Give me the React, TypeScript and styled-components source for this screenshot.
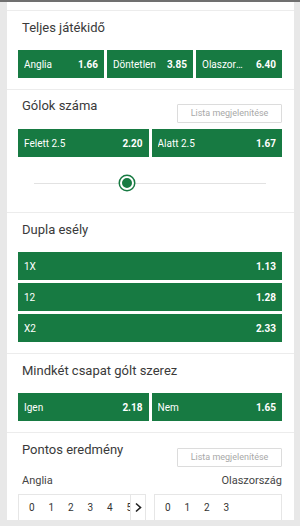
import React from "react";
import styled, { createGlobalStyle } from "styled-components";

const GREEN = "#177a42";

const GlobalStyle = createGlobalStyle`
  html, body {
    margin: 0;
    padding: 0;
    background: #e8e8e8;
    font-family: Roboto, "Liberation Sans", Arial, sans-serif;
  }
`;

interface Odd {
  label: string;
  value: string;
}

const fullTime: Odd[] = [
  { label: "Anglia", value: "1.66" },
  { label: "Döntetlen", value: "3.85" },
  { label: "Olaszország", value: "6.40" },
];
const goals: Odd[] = [
  { label: "Felett 2.5", value: "2.20" },
  { label: "Alatt 2.5", value: "1.67" },
];
const doubleChance: Odd[] = [
  { label: "1X", value: "1.13" },
  { label: "12", value: "1.28" },
  { label: "X2", value: "2.33" },
];
const bothScore: Odd[] = [
  { label: "Igen", value: "2.18" },
  { label: "Nem", value: "1.65" },
];

function OddButton({ odd }: { odd: Odd }) {
  return (
    <OddBox>
      <OddLabel>{odd.label}</OddLabel>
      <OddValue>{odd.value}</OddValue>
    </OddBox>
  );
}

function App() {
  return (
    <Page>
      <GlobalStyle />
      <TopLine />
      <Column>
        <Spacer />
        <Section>
          <Title>Teljes játékidő</Title>
          <OddRow $cols={3}>
            {fullTime.map((o) => (
              <OddButton key={o.label} odd={o} />
            ))}
          </OddRow>
        </Section>

        <Section $top={6} $bottom={0}>
          <Header>
            <Title>Gólok száma</Title>
            <ListButton>Lista megjelenítése</ListButton>
          </Header>
          <OddRow $cols={2} $mt={6}>
            {goals.map((o) => (
              <OddButton key={o.label} odd={o} />
            ))}
          </OddRow>
          <Slider>
            <Track>
              <Thumb $pos={40} />
            </Track>
          </Slider>
        </Section>

        <Section>
          <Title>Dupla esély</Title>
          <OddList>
            {doubleChance.map((o) => (
              <OddButton key={o.label} odd={o} />
            ))}
          </OddList>
        </Section>

        <Section>
          <Title>Mindkét csapat gólt szerez</Title>
          <OddRow $cols={2}>
            {bothScore.map((o) => (
              <OddButton key={o.label} odd={o} />
            ))}
          </OddRow>
        </Section>

        <Section $bottom={0}>
          <Header>
            <Title>Pontos eredmény</Title>
            <ListButton>Lista megjelenítése</ListButton>
          </Header>
          <TeamRow>
            <span>Anglia</span>
            <span>Olaszország</span>
          </TeamRow>
          <ScoreRow>
            <ScoreBox>
              <Digits>
                {[0, 1, 2, 3, 4, 5, 6].map((n) => (
                  <Digit key={n}>{n}</Digit>
                ))}
              </Digits>
              <Arrow>
                <svg width="9" height="11" viewBox="0 0 9 11">
                  <path
                    d="M2 1.5 L6.5 5.5 L2 9.5"
                    fill="none"
                    stroke="#222"
                    strokeWidth="1.6"
                  />
                </svg>
              </Arrow>
            </ScoreBox>
            <ScoreBox>
              <Digits>
                {[0, 1, 2, 3].map((n) => (
                  <Digit key={n}>{n}</Digit>
                ))}
              </Digits>
            </ScoreBox>
          </ScoreRow>
        </Section>
      </Column>
    </Page>
  );
}

const Page = styled.div`
  width: 300px;
  height: 526px;
  overflow: hidden;
  background: #e8e8e8;
`;

const TopLine = styled.div`
  height: 2px;
  background: #707070;
`;

const Column = styled.div`
  margin: 0 6px 0 7px;
  background: #ffffff;
`;

const Spacer = styled.div`
  height: 8px;
`;

const Section = styled.div<{ $top?: number; $bottom?: number }>`
  border-top: 1px solid #ececec;
  padding: ${(p) => p.$top ?? 7}px 12px ${(p) => p.$bottom ?? 11}px 11px;
`;

const Header = styled.div`
  display: flex;
  justify-content: space-between;
  align-items: flex-start;
`;

const Title = styled.div`
  font-size: 13px;
  line-height: 20px;
  color: #3a3a3a;
  padding-left: 4px;
`;

const ListButton = styled.div`
  margin-top: 8px;
  width: 103px;
  height: 17px;
  border: 1px solid #dcdcdc;
  border-radius: 1px;
  font-size: 9px;
  line-height: 17px;
  text-align: center;
  color: #a8a8a8;
`;

const OddRow = styled.div<{ $cols: number; $mt?: number }>`
  display: grid;
  grid-template-columns: repeat(${(p) => p.$cols}, 1fr);
  gap: 3px;
  margin-top: ${(p) => p.$mt ?? 12}px;
`;

const OddList = styled.div`
  display: flex;
  flex-direction: column;
  gap: 3px;
  margin-top: 12px;
`;

const OddBox = styled.div`
  display: flex;
  align-items: center;
  height: 28px;
  padding: 0 6px;
  background: ${GREEN};
  color: #fff;
  font-size: 10px;
  min-width: 0;
`;

const OddLabel = styled.span`
  flex: 1;
  min-width: 0;
  margin-right: 10px;
  white-space: nowrap;
  overflow: hidden;
  text-overflow: ellipsis;
`;

const OddValue = styled.span`
  font-weight: bold;
`;

const Slider = styled.div`
  padding: 19px 16px 20px 16px;
`;

const Track = styled.div`
  position: relative;
  height: 16px;
  &::before {
    content: "";
    position: absolute;
    left: 0;
    right: 0;
    top: 7px;
    height: 1px;
    background: #e2e2e2;
  }
`;

const Thumb = styled.div<{ $pos: number }>`
  position: absolute;
  top: 0;
  left: calc(${(p) => p.$pos}% - 7px);
  width: 10px;
  height: 10px;
  border-radius: 50%;
  background: ${GREEN};
  border: 2px solid #fff;
  box-shadow: 0 0 0 1.5px ${GREEN};
`;

const TeamRow = styled.div`
  display: flex;
  justify-content: space-between;
  margin-top: 6px;
  padding: 0 0 0 4px;
  font-size: 11px;
  line-height: 16px;
  color: #444;
`;

const ScoreRow = styled.div`
  display: grid;
  grid-template-columns: 1fr 1fr;
  gap: 8px;
  margin-top: 5px;
`;

const ScoreBox = styled.div`
  display: flex;
  height: 26px;
  border: 1px solid #e6e6e6;
  border-bottom: none;
  box-sizing: border-box;
  background: #fff;
  overflow: hidden;
`;

const Digits = styled.div`
  flex: 1;
  display: flex;
  align-items: center;
  padding-left: 3px;
  overflow: hidden;
  min-width: 0;
`;

const Digit = styled.span`
  flex: 0 0 19.5px;
  text-align: center;
  font-size: 10px;
  color: #333;
`;

const Arrow = styled.div`
  width: 14px;
  display: flex;
  align-items: center;
  justify-content: center;
  border-left: 1px solid #e6e6e6;
`;

export default App;
